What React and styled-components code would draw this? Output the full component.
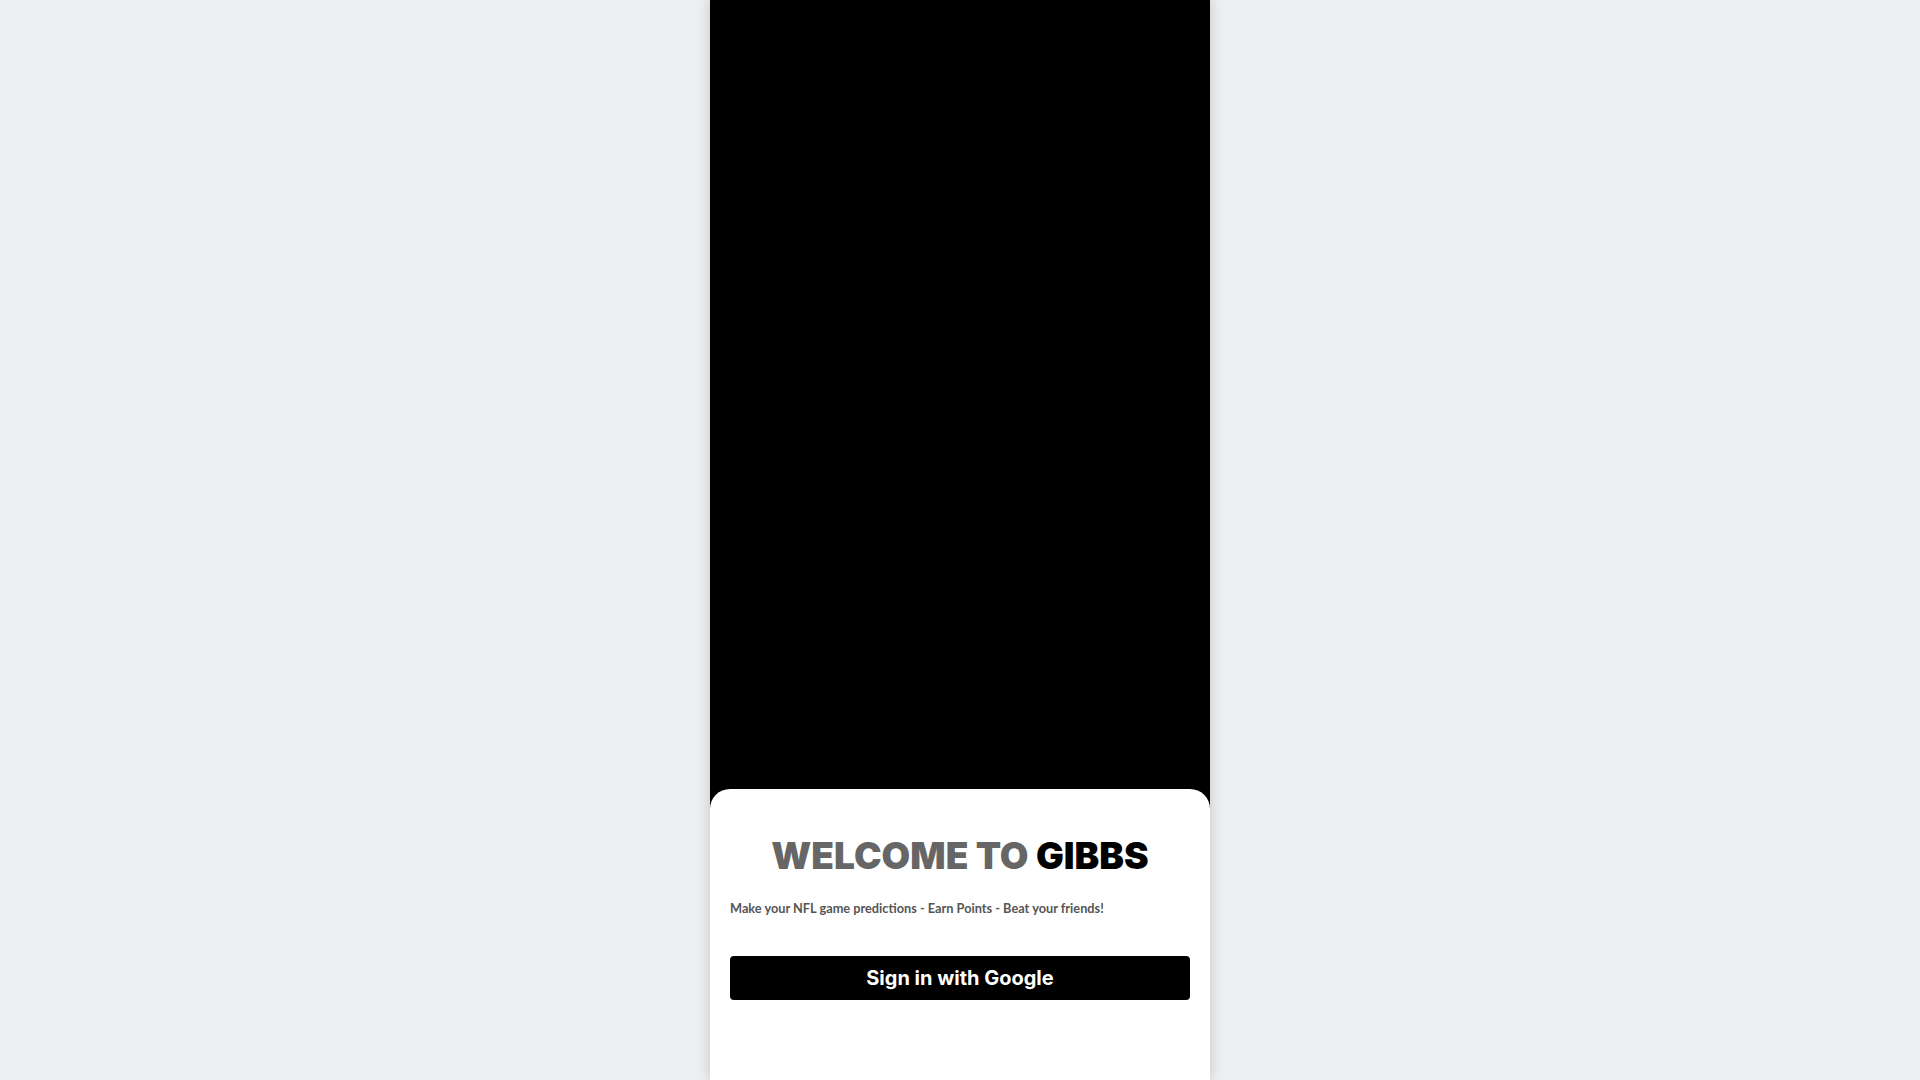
import React from "react";
import styled, { createGlobalStyle } from "styled-components";

const Global = createGlobalStyle`
  html, body { margin: 0; padding: 0; height: 100%; }
  body { background: #edeef0; font-family: "Libre Franklin", Inter, "Noto Sans", sans-serif; }
  #root { height: 100%; }
`;

const Page = styled.div`
  height: 100vh;
  display: flex;
  justify-content: center;
`;

const Phone = styled.div`
  width: 500px;
  height: 100%;
  background: #000;
  display: flex;
  flex-direction: column;
  box-shadow: 0 0 12px rgba(0, 0, 0, 0.18);
`;

const Hero = styled.div`
  flex: 1;
`;

const Card = styled.div`
  height: 291px;
  background: #fff;
  border-radius: 20px 20px 0 0;
  padding: 45px 20px 0;
  box-sizing: border-box;
  display: flex;
  flex-direction: column;
`;

const Title = styled.h1`
  margin: 0;
  text-align: center;
  font-family: Inter, sans-serif;
  font-weight: 900;
  font-size: 37px;
  letter-spacing: 0;
  line-height: 44px;
  color: #666;
`;

const Accent = styled.span`
  color: #000;
`;

const Subtitle = styled.p`
  margin: 21px 0 0;
  font-family: Lato, sans-serif;
  font-weight: 700;
  font-size: 12.75px;
  line-height: 18px;
  color: #555;
`;

const GoogleButton = styled.button`
  margin-top: 39px;
  height: 44px;
  width: 100%;
  border: none;
  border-radius: 4px;
  background: #000;
  color: #fff;
  font-family: Inter, sans-serif;
  font-weight: 700;
  font-size: 20px;
  cursor: pointer;
`;

export default function App() {
  return (
    <>
      <Global />
      <Page>
        <Phone>
          <Hero />
          <Card>
            <Title>
              WELCOME TO <Accent>GIBBS</Accent>
            </Title>
            <Subtitle>Make your NFL game predictions - Earn Points - Beat your friends!</Subtitle>
            <GoogleButton>Sign in with Google</GoogleButton>
          </Card>
        </Phone>
      </Page>
    </>
  );
}
